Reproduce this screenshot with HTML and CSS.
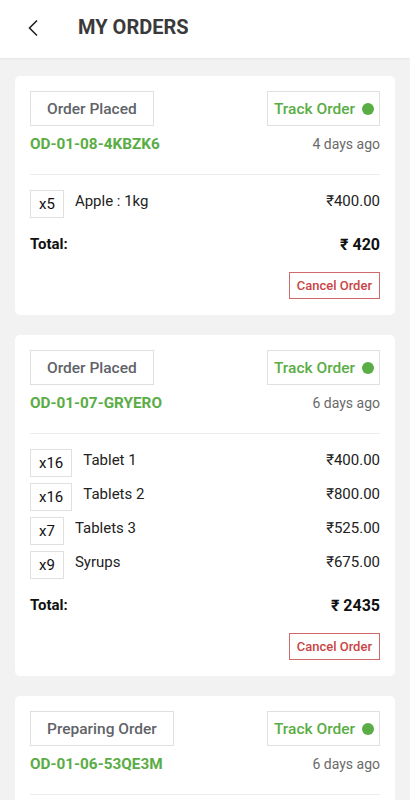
FILE: index.html
```html
<!DOCTYPE html>
<html lang="en">
<head>
<meta charset="utf-8">
<title>My Orders</title>
<link rel="stylesheet" href="styles.css">
</head>
<body>
<header class="topbar">
  <svg class="back" width="12" height="18" viewBox="0 0 12 18"><path d="M10 1.5 L2.5 9 L10 16.5" fill="none" stroke="#222" stroke-width="1.6"/></svg>
  <h1 class="title">MY ORDERS</h1>
</header>
<main class="list">
  <section class="card">
    <div class="row-top">
      <span class="status">Order Placed</span>
      <span class="track">Track Order <i class="dot"></i></span>
    </div>
    <div class="row-id">
      <span class="oid">OD-01-08-4KBZK6</span>
      <span class="ago">4 days ago</span>
    </div>
    <hr class="divider">
    <div class="items">
      <div class="item"><span class="qty">x5</span><span class="name">Apple : 1kg</span><span class="price">₹400.00</span></div>
    </div>
    <div class="total"><span>Total:</span><span class="total-val">₹ 420</span></div>
    <div class="actions"><button class="cancel">Cancel Order</button></div>
  </section>
  <section class="card">
    <div class="row-top">
      <span class="status">Order Placed</span>
      <span class="track">Track Order <i class="dot"></i></span>
    </div>
    <div class="row-id">
      <span class="oid">OD-01-07-GRYERO</span>
      <span class="ago">6 days ago</span>
    </div>
    <hr class="divider">
    <div class="items">
      <div class="item"><span class="qty">x16</span><span class="name">Tablet 1</span><span class="price">₹400.00</span></div>
      <div class="item"><span class="qty">x16</span><span class="name">Tablets 2</span><span class="price">₹800.00</span></div>
      <div class="item"><span class="qty">x7</span><span class="name">Tablets 3</span><span class="price">₹525.00</span></div>
      <div class="item"><span class="qty">x9</span><span class="name">Syrups</span><span class="price">₹675.00</span></div>
    </div>
    <div class="total"><span>Total:</span><span class="total-val">₹ 2435</span></div>
    <div class="actions"><button class="cancel">Cancel Order</button></div>
  </section>
  <section class="card">
    <div class="row-top">
      <span class="status">Preparing Order</span>
      <span class="track">Track Order <i class="dot"></i></span>
    </div>
    <div class="row-id">
      <span class="oid">OD-01-06-53QE3M</span>
      <span class="ago">6 days ago</span>
    </div>
    <hr class="divider">
  </section>
</main>
</body>
</html>
```
FILE: styles.css
```css
* { box-sizing: border-box; }
html, body { margin: 0; padding: 0; }
body {
  background: #f2f2f2;
  font-family: Roboto, "Noto Sans", "DejaVu Sans", sans-serif;
  color: #1a1a1a;
  width: 410px;
  height: 800px;
  overflow: hidden;
}
.topbar {
  height: 58px;
  background: #fff;
  display: flex;
  align-items: center;
  padding-left: 27px;
  box-shadow: 0 1px 2px rgba(0,0,0,0.06);
}
.back { display: block; margin-top: -3px; }
.title {
  margin: -4px 0 0 39px;
  font-size: 20px;
  font-weight: 700;
  color: #3a3a3a;
  line-height: 24px;
}
.list {
  padding: 18px 15px 0;
  display: flex;
  flex-direction: column;
  gap: 20px;
}
.card {
  background: #fff;
  border-radius: 5px;
  padding: 15px 15px 16px;
}
.row-top {
  display: flex;
  justify-content: space-between;
  align-items: center;
}
.status, .track {
  height: 35px;
  border: 1px solid #e0e0e0;
  display: inline-flex;
  align-items: center;
  font-size: 15.5px;
  font-weight: 500;
}
.status {
  padding: 0 16px;
  color: #5f6368;
}
.track {
  padding: 0 5px 0 6px;
  color: #5aad45;
  gap: 7px;
}
.dot {
  width: 12px;
  height: 12px;
  border-radius: 50%;
  background: #5aad45;
  display: inline-block;
}
.row-id {
  margin-top: 8px;
  height: 20px;
  display: flex;
  justify-content: space-between;
  align-items: center;
}
.oid {
  color: #5aad45;
  font-weight: 700;
  font-size: 15.3px;
}
.ago {
  color: #6a6a6a;
  font-size: 14px;
}
.divider {
  margin: 20px 0 0;
  border: 0;
  border-top: 1px solid #ececec;
}
.items {
  margin-top: 15px;
  display: flex;
  flex-direction: column;
  gap: 6px;
}
.item {
  display: flex;
  align-items: flex-start;
}
.qty {
  height: 28px;
  padding: 0 8px;
  border: 1px solid #e0e0e0;
  display: inline-flex;
  align-items: center;
  justify-content: center;
  font-size: 15px;
  color: #111;
}
.name {
  margin-left: 11px;
  line-height: 22px;
  font-size: 15px;
  color: #222;
  flex: 1;
}
.price {
  line-height: 22px;
  font-size: 15px;
  color: #222;
}
.total {
  margin-top: 16px;
  height: 20px;
  display: flex;
  justify-content: space-between;
  align-items: center;
  font-weight: 700;
  font-size: 15px;
  color: #111;
}
.total-val { font-size: 16px; }
.actions {
  margin-top: 18px;
  display: flex;
  justify-content: flex-end;
}
.cancel {
  height: 27px;
  padding: 0 7px;
  background: #fff;
  border: 1px solid #d06a6a;
  color: #c94545;
  font-family: Roboto, "Noto Sans", sans-serif;
  font-size: 13px;
  font-weight: 500;
  border-radius: 0;
}
```
